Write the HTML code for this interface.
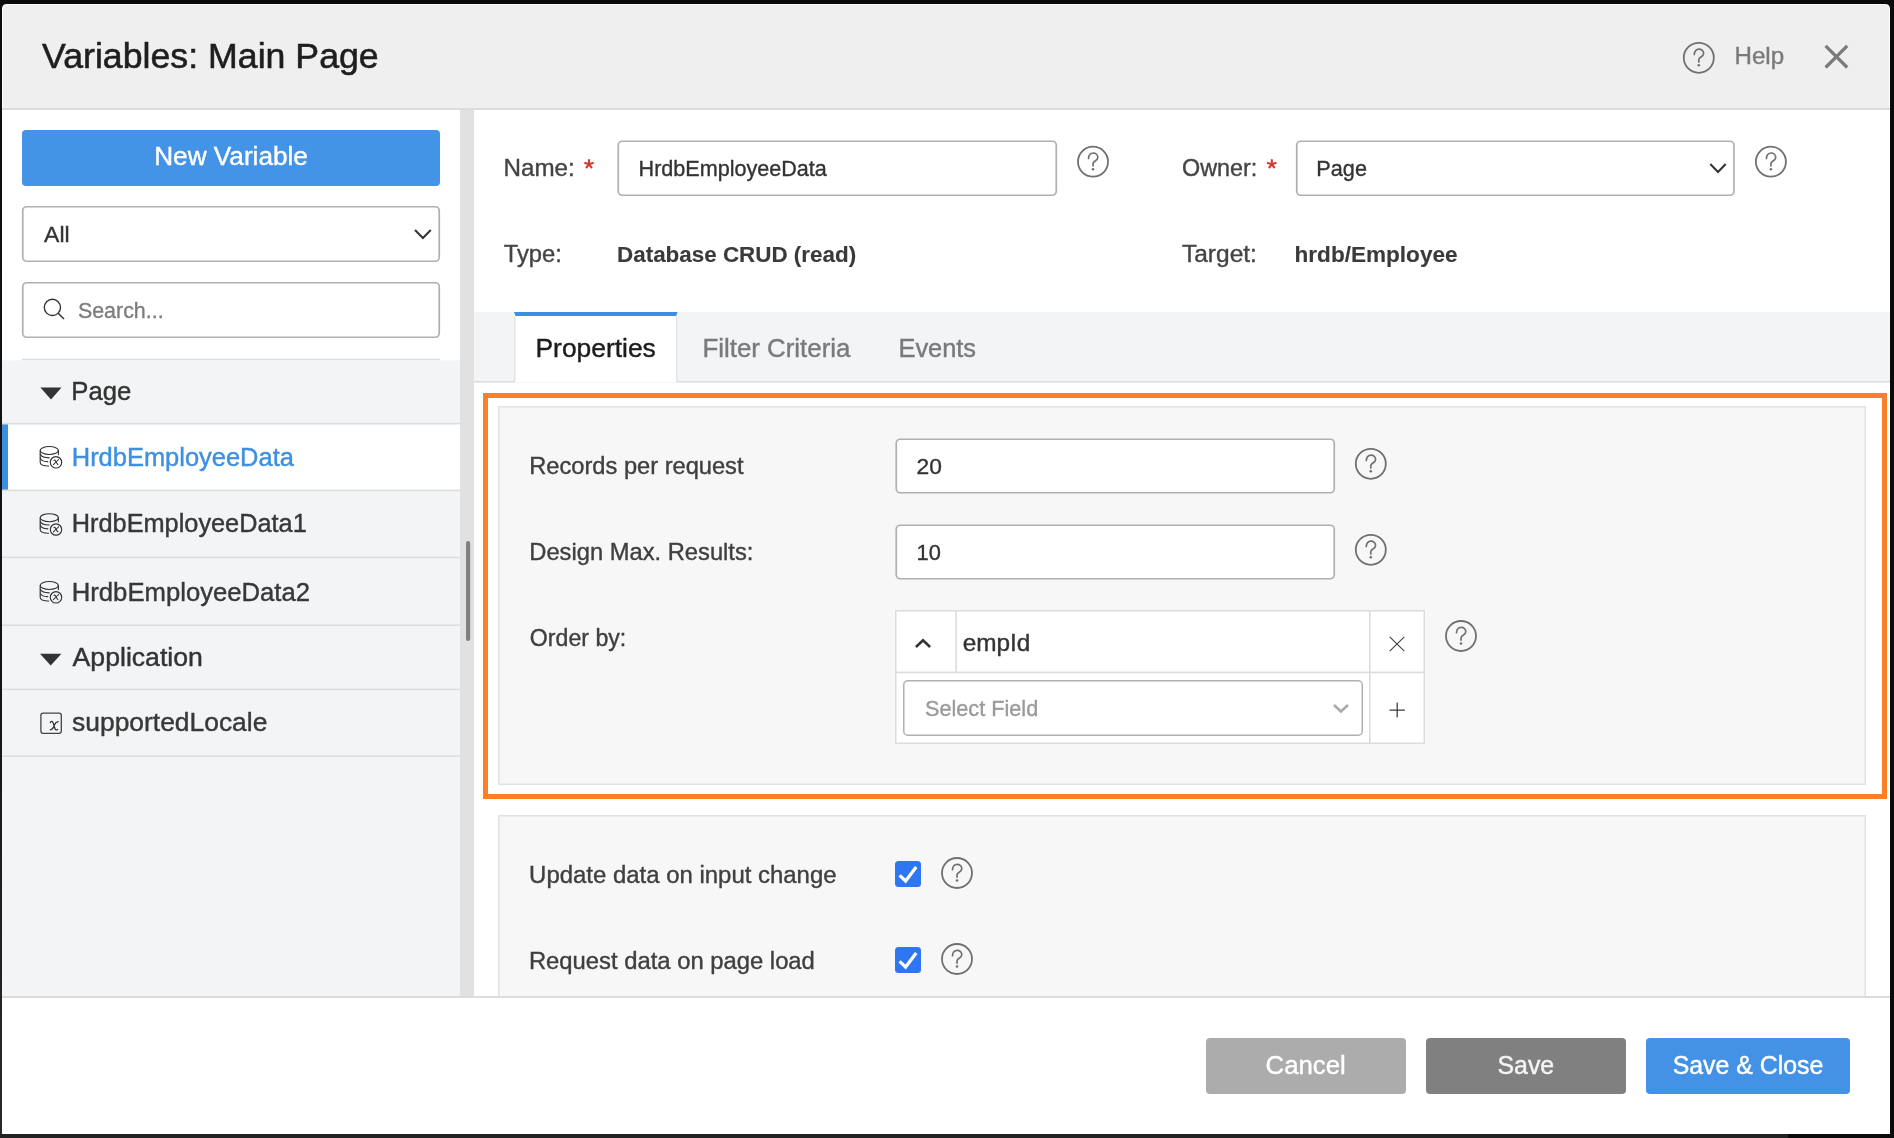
<!DOCTYPE html>
<html><head><meta charset="utf-8"><title>Variables: Main Page</title>
<style>
html,body{margin:0;padding:0;background:#0b0b0b;width:1894px;height:1138px;overflow:hidden}
svg{display:block;will-change:transform}
text{font-family:"Liberation Sans",sans-serif}
</style></head><body>
<svg width="1894" height="1138" viewBox="0 0 1894 1138">
<defs>
<g id="help"><circle cx="0" cy="0" r="15" fill="none" stroke="#707070" stroke-width="1.8"/><path d="M-4.5,-3.3 C-4.5,-6.6 -2.4,-8.7 0.1,-8.7 C2.8,-8.7 4.8,-6.8 4.8,-4.3 C4.8,-2.1 2.8,-1.2 1,0.1 C0.2,0.8 0,1.6 0,2.4 V4.1" fill="none" stroke="#707070" stroke-width="1.7" stroke-linecap="round"/><circle cx="0" cy="7.5" r="1.3" fill="#707070"/></g>
<g id="db" fill="none" stroke="#333" stroke-width="1.15" stroke-linecap="round">
<ellipse cx="49.3" cy="450.5" rx="9.1" ry="4"/>
<path d="M40.2,450.5 V462.5 Q40.5,466 48.6,466"/>
<path d="M58.4,450.5 V454.6"/>
<path d="M40.3,454.2 Q41,457.8 49.2,457.8"/>
<path d="M40.3,458 Q41,461.6 47.8,461.6"/>
<circle cx="56" cy="462.3" r="5.7"/>
<path d="M53.9,460.4 Q54.7,459.5 55.4,460.7 Q56.6,463.2 57.9,464.6" stroke-width="1.05"/>
<path d="M58.6,459.5 Q57.8,460.6 56.6,461.4 Q55,463 53.4,464.7" stroke-width="1.05"/>
</g>
</defs>
<!-- backdrop bits -->
<linearGradient id="lg" x1="0" y1="0" x2="0" y2="1"><stop offset="0" stop-color="#0c0c0c"/><stop offset="0.6" stop-color="#141414"/><stop offset="1" stop-color="#2a2a2a"/></linearGradient>
<rect x="0" y="0" width="2" height="1138" fill="url(#lg)"/>
<rect x="0" y="1134" width="1788" height="4" fill="#222222"/>
<!-- dialog -->
<path d="M2,9 Q2,4 7,4 H1885 Q1890,4 1890,9 V1134 H2 Z" fill="#ffffff"/>
<!-- header -->
<path d="M3,9.5 Q3,5 7.5,5 H1884.5 Q1889,5 1889,9.5 V108 H3 Z" fill="#efefef"/>
<rect x="2" y="108" width="1888" height="2" fill="#dcdcdc"/>
<!-- header icons -->
<use href="#help" x="1698.8" y="57.8" style="--c:#777"/>
<path d="M1825.6,45.9 L1847.2,67.5 M1847.2,45.9 L1825.6,67.5" stroke="#7a7a7a" stroke-width="3.2"/>

<!-- left panel -->
<rect x="2" y="110" width="458" height="887" fill="#ffffff"/>
<rect x="22" y="130" width="418" height="56" rx="4" fill="#4393e6"/>
<rect x="22.75" y="206.75" width="416.5" height="54.5" rx="4" fill="#fff" stroke="#b0b0b0" stroke-width="1.7"/>
<path d="M415,230 L422.9,238 L430.8,230" fill="none" stroke="#333" stroke-width="2"/>
<rect x="22.75" y="282.75" width="416.5" height="54.5" rx="4" fill="#fff" stroke="#b0b0b0" stroke-width="1.7"/>
<circle cx="52.4" cy="307.4" r="8.1" fill="none" stroke="#333" stroke-width="1.4"/>
<path d="M58.2,313.2 L64,319" stroke="#333" stroke-width="1.5"/>
<rect x="22" y="358.8" width="418" height="1.6" fill="#dcdcdc"/>
<rect x="2" y="360.4" width="458" height="636" fill="#f3f4f6"/>
<!-- rows -->
<rect x="2" y="424.4" width="458" height="65.2" fill="#ffffff"/>
<rect x="2" y="422.8" width="458" height="1.6" fill="#dedede"/>
<rect x="2" y="489.6" width="458" height="1.6" fill="#dedede"/>
<rect x="2" y="556.6" width="458" height="1.6" fill="#dedede"/>
<rect x="2" y="624.4" width="458" height="1.6" fill="#dedede"/>
<rect x="2" y="688.6" width="458" height="1.6" fill="#dedede"/>
<rect x="2" y="755.4" width="458" height="1.6" fill="#dedede"/>
<rect x="2" y="424.4" width="6" height="65.2" fill="#3d8fe2"/>
<path d="M40.4,387.6 H61.5 L51,399.5 Z" fill="#333"/>
<path d="M40,653.8 H61.4 L50.7,665.5 Z" fill="#333"/>
<use href="#db"/>
<use href="#db" y="67.2"/>
<use href="#db" y="135"/>
<rect x="40.9" y="713.1" width="20.4" height="20.2" rx="2.2" fill="none" stroke="#444" stroke-width="1.3"/>
<path d="M50.2,722.6 Q51.6,720.6 52.6,721.8 Q53.8,723.5 54.6,727.5 Q55.4,731 57.6,729.4 M58.2,721.6 Q55.5,722.2 54.3,725.2 Q52.8,729.6 50.2,729.8" fill="none" stroke="#333" stroke-width="1.25" stroke-linecap="round"/>
<!-- gutter -->
<rect x="460" y="110" width="14" height="887" fill="#e1e1e1"/>
<rect x="466" y="541" width="4.2" height="100" rx="2.1" fill="#808080"/>

<!-- right panel -->
<rect x="474" y="110" width="1416" height="887" fill="#ffffff"/>
<rect x="618.25" y="141.25" width="438" height="54" rx="4" fill="#fff" stroke="#b0b0b0" stroke-width="1.7"/>
<path d="M1570,0" />
<use href="#help" x="1093" y="161.7"/>
<rect x="1296.75" y="141.25" width="437.2" height="54" rx="4" fill="#fff" stroke="#b0b0b0" stroke-width="1.7"/>
<path d="M1710.3,164 L1718,172 L1725.7,164" fill="none" stroke="#333" stroke-width="2"/>
<use href="#help" x="1770.9" y="161.7"/>
<path d="M583.8,0" />

<!-- tabs -->
<rect x="474" y="312" width="1416" height="69.2" fill="#f3f4f6"/>
<rect x="474" y="381" width="1416" height="1.6" fill="#dcdcdc"/>
<rect x="514" y="312" width="163.6" height="70.6" fill="#ffffff"/>
<rect x="514" y="316" width="1.5" height="66" fill="#e3e3e3"/>
<rect x="676.1" y="316" width="1.5" height="66" fill="#e3e3e3"/>
<path d="M514,312 H677.6 L676.1,316 H515.5 Z" fill="#3b8ee3"/>

<!-- orange box -->
<rect x="485.5" y="395.5" width="1399" height="401" fill="#ffffff" stroke="#fe7f27" stroke-width="5"/>
<rect x="498.75" y="406.75" width="1366.5" height="377.5" fill="#f7f7f7" stroke="#e2e2e2" stroke-width="1.5"/>
<rect x="896.25" y="439.25" width="438" height="53.5" rx="4" fill="#fff" stroke="#b0b0b0" stroke-width="1.7"/>
<use href="#help" x="1370.8" y="463.8"/>
<rect x="896.25" y="525.25" width="438" height="53.5" rx="4" fill="#fff" stroke="#b0b0b0" stroke-width="1.7"/>
<use href="#help" x="1370.8" y="549.8"/>
<!-- order by widget -->
<rect x="895.75" y="610.75" width="528.5" height="132.5" fill="#fff" stroke="#dcdcdc" stroke-width="1.5"/>
<rect x="895" y="671.6" width="530" height="1.6" fill="#dcdcdc"/>
<rect x="955.3" y="610" width="1.6" height="62" fill="#dcdcdc"/>
<rect x="1369" y="610" width="1.6" height="134" fill="#dcdcdc"/>
<path d="M915.9,647 L923,640.2 L930.1,647" fill="none" stroke="#333" stroke-width="2.6"/>
<path d="M1389.7,636.8 L1404.3,651.2 M1404.3,636.8 L1389.7,651.2" stroke="#3a3a3a" stroke-width="1.05"/>
<rect x="903.75" y="680.75" width="458.5" height="54.5" rx="4" fill="#fff" stroke="#b0b0b0" stroke-width="1.5"/>
<path d="M1334,705 L1341,711.4 L1348,705" fill="none" stroke="#aaa" stroke-width="2.7"/>
<path d="M1389.5,710 H1404.9 M1397.2,702.4 V717.6" stroke="#3a3a3a" stroke-width="1.25"/>
<use href="#help" x="1461" y="636"/>

<!-- panel 2 -->
<rect x="498.75" y="815.75" width="1366.5" height="300" fill="#f7f7f7" stroke="#e2e2e2" stroke-width="1.5"/>
<rect x="895" y="861" width="26" height="26" rx="3.5" fill="#2f77f2"/>
<path d="M899.6,875.4 L905.6,881 L916.2,867" fill="none" stroke="#fff" stroke-width="3.2"/>
<use href="#help" x="957" y="873"/>
<rect x="895" y="947" width="26" height="26" rx="3.5" fill="#2f77f2"/>
<path d="M899.6,961.4 L905.6,967 L916.2,953" fill="none" stroke="#fff" stroke-width="3.2"/>
<use href="#help" x="957" y="959"/>

<!-- footer -->
<rect x="2" y="997" width="1888" height="137" fill="#ffffff"/>
<rect x="2" y="996" width="1888" height="2" fill="#dcdcdc"/>
<rect x="1206" y="1038" width="200" height="56" rx="4" fill="#acacac"/>
<rect x="1426" y="1038" width="200" height="56" rx="4" fill="#808080"/>
<rect x="1646" y="1038" width="204" height="56" rx="4" fill="#4492e6"/>
<!-- required stars -->
<path d="M589,164.2 L589.00,159.30 M589,164.2 L593.66,162.69 M589,164.2 L591.88,168.16 M589,164.2 L586.12,168.16 M589,164.2 L584.34,162.69" stroke="#d23a2c" stroke-width="2.1" stroke-linecap="butt"/>
<path d="M1271.8,164.2 L1271.80,159.30 M1271.8,164.2 L1276.46,162.69 M1271.8,164.2 L1274.68,168.16 M1271.8,164.2 L1268.92,168.16 M1271.8,164.2 L1267.14,162.69" stroke="#d23a2c" stroke-width="2.1" stroke-linecap="butt"/>
<text x="42.0" y="68" font-size="35.71" fill="#1e1e1e" stroke="#1e1e1e" stroke-width="0.57">Variables: Main Page</text>
<text x="1734.47" y="64" font-size="24.17" fill="#7a7a7a" stroke="#7a7a7a" stroke-width="0.39">Help</text>
<text x="154.21" y="165" font-size="26.18" fill="#ffffff" stroke="#ffffff" stroke-width="0.42">New Variable</text>
<text x="44.1" y="242" font-size="22.97" fill="#333333" stroke="#333333" stroke-width="0.37">All</text>
<text x="77.94" y="318" font-size="21.42" fill="#7d7d7d" stroke="#7d7d7d" stroke-width="0.34">Search...</text>
<text x="71.35" y="400.2" font-size="25.68" fill="#333333" stroke="#333333" stroke-width="0.41">Page</text>
<text x="71.76" y="466" font-size="25.46" fill="#3d8fe2" stroke="#3d8fe2" stroke-width="0.41">HrdbEmployeeData</text>
<text x="71.77" y="532.2" font-size="25.32" fill="#383838" stroke="#383838" stroke-width="0.41">HrdbEmployeeData1</text>
<text x="71.75" y="600.6" font-size="25.68" fill="#383838" stroke="#383838" stroke-width="0.41">HrdbEmployeeData2</text>
<text x="72.6" y="666" font-size="26.63" fill="#333333" stroke="#333333" stroke-width="0.43">Application</text>
<text x="72.07" y="731" font-size="26.41" fill="#383838" stroke="#383838" stroke-width="0.42">supportedLocale</text>
<text x="503.56" y="176.1" font-size="24.19" fill="#444444" stroke="#444444" stroke-width="0.39">Name:</text>
<text x="638.57" y="176" font-size="21.58" fill="#333333" stroke="#333333" stroke-width="0.35">HrdbEmployeeData</text>
<text x="1182.07" y="176" font-size="23.36" fill="#444444" stroke="#444444" stroke-width="0.37">Owner:</text>
<text x="1316.37" y="175.8" font-size="21.67" fill="#333333" stroke="#333333" stroke-width="0.35">Page</text>
<text x="503.73" y="262.1" font-size="23.74" fill="#444444" stroke="#444444" stroke-width="0.38">Type:</text>
<text x="617.05" y="262" font-size="22.42" fill="#3a3a3a" stroke="#3a3a3a" stroke-width="0.12" font-weight="bold">Database CRUD (read)</text>
<text x="1182.01" y="262" font-size="24.51" fill="#444444" stroke="#444444" stroke-width="0.39">Target:</text>
<text x="1294.55" y="262" font-size="22.57" fill="#3a3a3a" stroke="#3a3a3a" stroke-width="0.12" font-weight="bold">hrdb/Employee</text>
<text x="535.49" y="357" font-size="26.4" fill="#1c1c1c" stroke="#1c1c1c" stroke-width="0.42">Properties</text>
<text x="702.43" y="356.6" font-size="25.87" fill="#7a7a7a" stroke="#7a7a7a" stroke-width="0.41">Filter Criteria</text>
<text x="898.47" y="356.6" font-size="25.38" fill="#7a7a7a" stroke="#7a7a7a" stroke-width="0.41">Events</text>
<text x="529.31" y="474.3" font-size="23.65" fill="#3f3f3f" stroke="#3f3f3f" stroke-width="0.38">Records per request</text>
<text x="916.56" y="474.3" font-size="22.8" fill="#333333" stroke="#333333" stroke-width="0.36">20</text>
<text x="529.3" y="560.1" font-size="23.72" fill="#3f3f3f" stroke="#3f3f3f" stroke-width="0.38">Design Max. Results:</text>
<text x="916.47" y="560" font-size="21.87" fill="#333333" stroke="#333333" stroke-width="0.35">10</text>
<text x="529.87" y="645.9" font-size="23.14" fill="#3f3f3f" stroke="#3f3f3f" stroke-width="0.37">Order by:</text>
<text x="962.73" y="650.6" font-size="24.37" fill="#333333" stroke="#333333" stroke-width="0.39">empId</text>
<text x="924.93" y="716" font-size="21.7" fill="#9a9a9a" stroke="#9a9a9a" stroke-width="0.35">Select Field</text>
<text x="529.12" y="882.8" font-size="23.94" fill="#3f3f3f" stroke="#3f3f3f" stroke-width="0.38">Update data on input change</text>
<text x="528.89" y="969" font-size="23.82" fill="#3f3f3f" stroke="#3f3f3f" stroke-width="0.38">Request data on page load</text>
<text x="1265.61" y="1074.1" font-size="25.76" fill="#ffffff" stroke="#ffffff" stroke-width="0.41">Cancel</text>
<text x="1497.51" y="1074.1" font-size="24.87" fill="#f5f5f5" stroke="#f5f5f5" stroke-width="0.4">Save</text>
<text x="1672.71" y="1074.1" font-size="24.86" fill="#ffffff" stroke="#ffffff" stroke-width="0.4">Save &amp; Close</text>
</svg>
</body></html>
